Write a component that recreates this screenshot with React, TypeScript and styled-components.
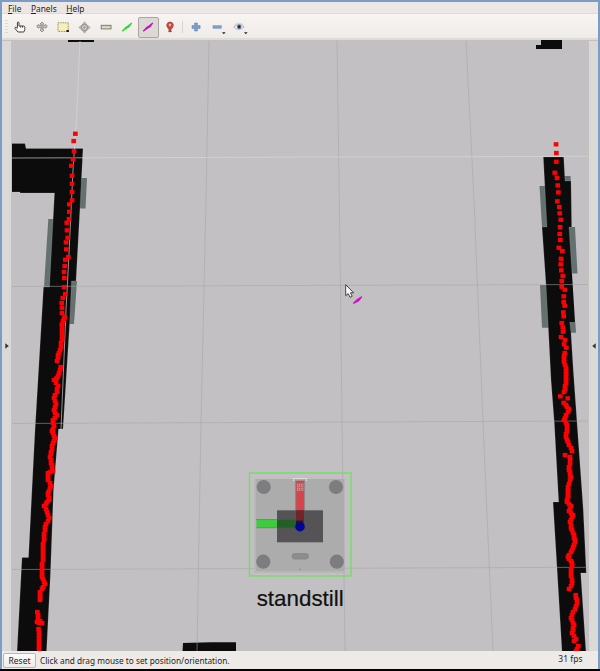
import React from "react";
import styled, { createGlobalStyle, css } from "styled-components";

const GlobalStyle = createGlobalStyle`
  *, *::before, *::after { box-sizing: border-box; }
  body { margin: 0; background: #000; overflow: hidden; }
`;

const Window = styled.div`
  width: 600px;
  height: 671px;
  padding: 2px 2px 0;
  display: flex;
  flex-direction: column;
  background: linear-gradient(#7b9cc5 0 669px, #000 669px);
  font-family: "Noto Sans", sans-serif;
  color: #252525;
`;

const MenuBar = styled.nav`
  display: flex;
  gap: 9.5px;
  height: 12px;
  flex: none;
  padding-left: 6px;
  background: #ece7e4;
  border-bottom: 1px solid #dedad7;
`;

const MenuItem = styled.span`
  font-size: 8.4px;
  line-height: 13px;
  white-space: nowrap;
  u { text-underline-offset: 1px; }
`;

const ToolBar = styled.div`
  display: flex;
  align-items: center;
  height: 26px;
  flex: none;
  padding: 2px 2px 0 3px;
  background: linear-gradient(#f7f4f2, #efebe8);
  border-bottom: 2px solid #dfdcd8;
`;

const Grip = styled.div`
  width: 3px;
  height: 15px;
  margin-right: 1.6px;
  background: repeating-linear-gradient(#dcd8d5 0 1px, transparent 1px 3px);
`;

const ToolButton = styled.button<{ $active?: boolean }>`
  width: 21.35px;
  height: 21px;
  padding: 0;
  display: grid;
  place-items: center;
  flex: none;
  border: 1px solid transparent;
  border-radius: 2px;
  background: none;
  ${(p) =>
    p.$active &&
    css`
      background: #dcd8d6;
      border-color: #aaa5a1;
    `}
  svg { display: block; overflow: visible; }
`;

const Separator = styled.div`
  width: 1px;
  height: 12px;
  margin: 0 2px;
  background: #d7d3d0;
`;

const Workspace = styled.main`
  display: flex;
  flex: none;
  height: 611px;
`;

const Gutter = styled.aside<{ $side: "left" | "right" }>`
  width: 10px;
  flex: none;
  display: grid;
  place-items: center;
  background: #dad9d7;
  border: 0 solid #c3c1bf;
  border-width: ${(p) => (p.$side === "left" ? "1px 1px 0 0" : "1px 0 0 1px")};
`;

const Scene = styled.svg`
  display: block;
  width: 576px;
  height: 611px;
  flex: none;
  background: #c2c0c2;
`;

const StatusBar = styled.footer`
  display: flex;
  align-items: center;
  height: 18px;
  flex: none;
  padding: 0 2px 0 1px;
  background: #eeeae7;
`;

const ResetButton = styled.button`
  width: 33px;
  height: 15px;
  padding: 0;
  border: 1px solid #bbb6b2;
  border-radius: 2px;
  background: linear-gradient(#fdfcfb, #eeebe8);
  color: #222;
  font: 8.5px/13px "Noto Sans", sans-serif;
`;

const Message = styled.span`
  margin-left: 4px;
  padding-top: 1px;
  font-size: 8.27px;
  line-height: 14px;
  white-space: nowrap;
`;

const FrameRate = styled.span`
  margin-left: auto;
  padding: 0 13.5px 3px 0;
  font-size: 8.5px;
  line-height: 14px;
`;

type Point = [number, number];

const leftDots: Point[] = [
  [75.3, 133.7], [73.7, 141], [74, 151.3], [73, 159.3], [71.3, 165.7], [72, 175.7], [72, 183.7],
  [72, 192], [72, 200.3], [69.3, 204.3], [69.3, 211.7], [69, 219], [66.7, 222.7], [67, 230.3],
  [67.7, 237.7], [66, 242.3], [66.3, 249.3], [68.3, 257], [65.3, 259.7], [64.7, 266], [64, 272],
  [64.3, 278], [64, 287], [65.3, 294], [62.7, 298], [61.7, 303], [62, 308], [62, 313],
];

const leftTraces: Point[][] = [
  [[64.7, 317], [62.7, 321], [61.7, 326], [61.7, 340], [60, 350], [57.7, 355], [57.3, 361]],
  [[60.7, 367], [59, 373], [57, 378], [54, 380], [57.5, 386], [56.5, 392], [54, 398], [55.5, 404],
    [53.5, 410], [56.5, 415], [52.5, 420], [54, 426], [51.5, 431], [54.5, 438], [52, 446], [50, 457],
    [52.7, 471], [47.7, 473], [48.3, 480], [51, 486], [47.7, 493], [49, 500], [44.3, 506],
    [46.7, 512], [49, 518], [45, 527], [44, 537], [42.7, 547], [43.3, 557], [41.7, 567],
    [42.3, 577], [44.5, 584], [40.3, 592], [40.3, 600]],
  [[37.3, 612], [37.7, 618], [41.7, 623], [37, 622]],
  [[38.5, 629], [39, 650]],
];

const rightDots: Point[] = [
  [556, 144.3], [556.3, 153], [556.3, 161.7], [554.7, 172.7], [557, 178], [557.7, 185.3],
  [558.3, 192.3], [557.3, 201.3], [559.3, 207], [559.7, 213.3], [560.7, 219.7], [560, 227],
  [559.7, 234], [560.3, 240], [558.7, 247.7], [562.3, 251], [561, 258.7], [560.7, 264.3],
  [561.3, 270.3], [562.7, 276], [561.7, 281], [561.7, 286.7], [564.7, 289.7], [563.7, 296.3],
  [563.7, 302], [564.7, 305.7], [563.3, 312.3], [563.7, 316.3], [561.7, 323], [562.7, 327.3],
  [563, 331.7], [561, 337], [565, 340], [564, 344.3], [566.3, 347.7], [560.3, 396.3],
  [567.7, 398.3], [565, 455],
];

const rightTraces: Point[][] = [
  [[564.7, 353], [564, 362], [566, 368], [566.3, 380], [564, 392]],
  [[563.7, 402.7], [569.3, 409.3], [566, 415], [564, 420], [567.3, 425], [566, 437], [569.3, 445], [571.7, 451]],
  [[570, 457], [569, 470], [571, 477], [568.3, 487], [568.3, 495], [567, 502], [571, 506],
    [569, 511], [573.3, 515], [570, 522], [572.7, 533], [575.3, 540], [573.3, 547], [567.7, 557],
    [572.3, 563], [571, 573], [572.3, 583], [569.3, 589]],
  [[575.7, 595], [577.3, 603], [573.3, 612], [571, 618], [574, 625], [572, 633], [575.5, 639], [574.3, 641]],
  [[578.3, 646], [576, 651]],
];

/** Samples a polyline into evenly spaced scan returns on whole pixels. */
function sample(line: Point[], step = 3.5): Point[] {
  const out: Point[] = [line[0]];
  for (let i = 1; i < line.length; i++) {
    const [x0, y0] = line[i - 1];
    const [x1, y1] = line[i];
    const n = Math.max(1, Math.ceil(Math.hypot(x1 - x0, y1 - y0) / step));
    for (let k = 1; k <= n; k++) {
      out.push([Math.round(x0 + ((x1 - x0) * k) / n), Math.round(y0 + ((y1 - y0) * k) / n)]);
    }
  }
  return out;
}

const scan: Point[] = [
  ...leftDots,
  ...leftTraces.flatMap((t) => sample(t)),
  ...rightDots,
  ...rightTraces.flatMap((t) => sample(t)),
];

function Laser() {
  return (
    <g fill="#fb0204">
      {scan.map(([x, y], i) => (
        <rect key={i} x={x - 2.3} y={y - 2.1} width={4.7} height={4.3} />
      ))}
    </g>
  );
}

function Walls() {
  return (
    <>
      <g fill="#65716f">
        <path d="M81.5 178H87L85.5 208.5H79Z" />
        <path d="M48.3 219H55L51 287H44Z" />
        <path d="M70 281H77L74 324H68Z" />
        <path d="M539.5 186H547L549 227H542Z" />
        <path d="M563 176H570.5L571 184H563Z" />
        <path d="M568 227H575L577.5 273.5H570Z" />
        <path d="M540 285H548L550 327.7H542Z" />
        <path d="M569 322H575.3L576 332.7H569Z" />
      </g>
      <g fill="#0c0c0d" stroke="#dcdcd8" strokeOpacity=".35" strokeWidth=".5">
        <path d="M11 143.5H25L26 148.5H83L80 208L76 281H71.5L69.7 323L63 429H58.5L53.5 490L50.5 573L46.5 652H17L22 557.5H28.5L35 430L43.5 287H49.5L54.5 193H20V192H11Z" />
        <path d="M543.3 157H563.7L565 181H571L571.7 227H569L572 274L569.7 322L571 333L573.3 370L579 450L583.3 510L586.3 573H580.7L586 652H562L557 568L553 502H558.7L554.3 423L551 380L548.3 328L546 285L542 227H547L544.8 186Z" />
      </g>
      <path fill="#0c0c0d" d="M571 274H572L575 322H569ZM68 40H94V42H68ZM541 40H562V49H536V45H541ZM183 643L211 642.3H236V652H182.5Z" />
    </>
  );
}

function Grid() {
  return (
    <g fill="none" strokeWidth="1">
      <g stroke="#a5a4a4" strokeOpacity=".55">
        <path d="M209 41L206 200L201 422L197 651M337 41L340 250L342 422L345 651M466 41L474 200L483 422L493 651" />
        <path d="M12 286.5L588 284.5M12 423.5L588 421M12 569.5L588 567.3" />
      </g>
      <path stroke="#d9d8d7" strokeOpacity=".65" d="M12 158L588 156.3M80 41L76.5 120L73 170L68.7 260L66 310L61 429" />
    </g>
  );
}

function Robot() {
  return (
    <g>
      <rect x="255.5" y="479" width="89" height="93" fill="#adacad" />
      <path d="M255 479V572H344" fill="none" stroke="#b8b7b8" strokeWidth="2" />
      <g fill="#7d7d7f">
        <circle cx="263.7" cy="487" r="7.1" />
        <circle cx="336" cy="487" r="7.1" />
        <circle cx="263.3" cy="561.7" r="7.1" />
        <circle cx="336.8" cy="561.7" r="7.1" />
      </g>
      <path d="M293.5 481V478.5H306.5V481" fill="none" stroke="#dddcdc" />
      <rect x="295.3" y="480.5" width="9.4" height="31" fill="#8b7778" />
      <rect x="296.3" y="481" width="7.6" height="30" fill="#d7434a" />
      <g stroke="#b8a1a1" strokeWidth=".8" fill="none">
        <rect x="297.5" y="484" width="2" height="2.3" />
        <rect x="301" y="484" width="2" height="2.3" />
        <rect x="297.5" y="488" width="2" height="2.3" />
        <rect x="301" y="488" width="2" height="2.3" />
      </g>
      <rect x="277" y="510.3" width="46" height="32" fill="#555355" />
      <rect x="296" y="510.3" width="8" height="13" fill="#732429" />
      <rect x="256.5" y="519.5" width="21" height="8.3" fill="#3ecb3e" />
      <rect x="277" y="519.5" width="20" height="8.3" fill="#235f27" />
      <path d="M256.5 519.5H297M256.5 527.8H297" stroke="#326e34" strokeWidth=".8" strokeDasharray="1 1" />
      <path d="M296 525V520.5H303V524" fill="#281524" />
      <circle cx="300" cy="526.7" r="4.8" fill="#030494" />
      <rect x="292" y="553.5" width="16.5" height="5.6" rx="2.8" fill="#8d8c8e" stroke="#818082" strokeWidth=".7" />
      <circle cx="300" cy="569.5" r=".7" fill="#858486" />
      <rect x="249.5" y="473" width="101.5" height="103" fill="none" stroke="#6de35d" strokeWidth="1.4" />
      <text x="256.7" y="606.3" fontFamily="Liberation Sans, sans-serif" fontSize="22" textLength="87" lengthAdjust="spacingAndGlyphs" fill="#111" stroke="#111" strokeWidth=".2">
        standstill
      </text>
    </g>
  );
}

function Pointer() {
  return (
    <g>
      <path d="M345.7 284.7V295.7L348.2 293.6L350 297.3L352.2 296.3L350.5 292.8H353.6Z" fill="#fafafa" stroke="#333" strokeWidth=".9" />
      <path d="M353.3 303.4L357 299.6L361.8 296.6L359 300.5L356.5 302Z" fill="#d510c9" stroke="#d510c9" strokeWidth="1.1" />
    </g>
  );
}

function HandIcon() {
  return (
    <svg width="12" height="12" viewBox="0 0 12 12">
      <path d="M3.4 6.8V2Q3.4 1 4.2 1T5 2V5H9.4Q10.8 5.2 10.8 6.4V8.5L9.8 11H4L1 7.5Q.6 6.3 1.8 6.2L3.4 7.5M6.7 5.2V6.7M8.6 5.2V6.7" fill="#fff" stroke="#3d3d3d" strokeWidth="1" strokeLinejoin="round" />
    </svg>
  );
}

function OrbitIcon() {
  return (
    <svg width="12" height="12" viewBox="0 0 12 12">
      <g fill="#c9c9c7" stroke="#858585" strokeWidth=".8">
        <path d="M6 1L8 3H7V9H8L6 11L4 9H5V3H4Z" />
        <path d="M.8 4.7L3 3.5V4.5Q6 5.8 9 4.5V3.5L11.2 4.7L10 7.2L9 6.3Q6 7.7 3 6.3L2 7.2Z" />
      </g>
    </svg>
  );
}

function SelectIcon() {
  return (
    <svg width="12" height="12" viewBox="0 0 12 12">
      <rect x="1" y="1.8" width="10.3" height="8.6" fill="#f6efba" stroke="#75704f" strokeWidth=".8" strokeDasharray="1 .7" />
      <path d="M9.5 9H11.8V11H9.5Z" fill="#111" />
    </svg>
  );
}

function FocusIcon() {
  return (
    <svg width="13" height="13" viewBox="0 0 13 13">
      <g fill="#bcbcba" stroke="#999" strokeWidth=".7">
        <path d="M6.5 .8L8.5 3.5H4.5ZM6.5 12.2L8.5 9.5H4.5ZM.8 6.5L3.5 4.5V8.5ZM12.2 6.5L9.5 4.5V8.5Z" />
        <circle cx="6.5" cy="6.5" r="3" fill="#dededc" strokeWidth="1.3" />
        <circle cx="6.5" cy="6.5" r="1" fill="#999" />
      </g>
    </svg>
  );
}

function MeasureIcon() {
  return (
    <svg width="12" height="12" viewBox="0 0 12 12">
      <rect x="1.2" y="4.3" width="9.8" height="3.6" fill="#dedbc4" stroke="#77736c" strokeWidth=".9" />
      <path d="M3 5V6M5 5V6M7 5V6M9 5V6" stroke="#aaa78c" strokeWidth=".5" />
    </svg>
  );
}

function ArrowIcon({ color }: { color: string }) {
  return (
    <svg width="12" height="12" viewBox="0 0 12 12">
      <path d="M1.2 10.2L5 6.3L7 5L10.8 2L8 5.8L5.3 7.4Z" fill={color} stroke={color} strokeWidth="1.1" />
    </svg>
  );
}

function PinIcon() {
  return (
    <svg width="12" height="12" viewBox="0 0 12 12">
      <ellipse cx="6" cy="10.2" rx="2" ry="1" fill="#718052" />
      <path d="M6 11Q5.3 8.4 3.2 6Q2 3.8 3.6 1.9Q6 .1 8.5 1.9Q10 3.8 8.8 6Q6.7 8.4 6 11Z" fill="#d64236" stroke="#9d3930" strokeWidth=".7" />
      <circle cx="6" cy="4" r="1.4" fill="#f4d9d6" stroke="#9a302a" strokeWidth=".4" />
    </svg>
  );
}

function PlusIcon() {
  return (
    <svg width="12" height="12" viewBox="0 0 12 12">
      <path d="M4.6 2H7.4V4.6H10.1V7.4H7.4V10H4.6V7.4H2V4.6H4.6Z" fill="#7b9fca" stroke="#658ab9" strokeWidth=".6" />
    </svg>
  );
}

function MinusIcon() {
  return (
    <svg width="12" height="12" viewBox="0 0 12 12">
      <rect x="2" y="4.7" width="8.3" height="2.6" fill="#7b9fca" stroke="#7293bc" strokeWidth=".5" />
      <path d="M11 11.2H14.6L12.8 13.2Z" fill="#222" />
    </svg>
  );
}

function EyeIcon() {
  return (
    <svg width="12" height="12" viewBox="0 0 12 12">
      <path d="M.8 6Q6 .8 11.2 6Q6 10.8 .8 6Z" fill="#f7f7f6" stroke="#a6a5a3" strokeWidth=".8" />
      <path d="M1.5 4Q6 .2 10.5 4" fill="none" stroke="#bcbbb9" strokeWidth=".6" />
      <circle cx="6.2" cy="5.8" r="2.4" fill="#6682a3" />
      <circle cx="6.2" cy="5.8" r="1.3" fill="#13223a" />
      <path d="M11 11.2H14.6L12.8 13.2Z" fill="#222" />
    </svg>
  );
}

export default function App() {
  return (
    <>
      <GlobalStyle />
      <Window>
        <MenuBar>
          <MenuItem><u>F</u>ile</MenuItem>
          <MenuItem><u>P</u>anels</MenuItem>
          <MenuItem><u>H</u>elp</MenuItem>
        </MenuBar>
        <ToolBar>
          <Grip />
          <ToolButton aria-label="Interact"><HandIcon /></ToolButton>
          <ToolButton aria-label="Move camera"><OrbitIcon /></ToolButton>
          <ToolButton aria-label="Select"><SelectIcon /></ToolButton>
          <ToolButton aria-label="Focus camera"><FocusIcon /></ToolButton>
          <ToolButton aria-label="Measure"><MeasureIcon /></ToolButton>
          <ToolButton aria-label="Pose estimate"><ArrowIcon color="#27dc36" /></ToolButton>
          <ToolButton aria-label="Navigation goal" $active><ArrowIcon color="#c712bd" /></ToolButton>
          <ToolButton aria-label="Publish point"><PinIcon /></ToolButton>
          <Separator />
          <ToolButton aria-label="Add tool"><PlusIcon /></ToolButton>
          <ToolButton aria-label="Remove tool"><MinusIcon /></ToolButton>
          <ToolButton aria-label="Visibility"><EyeIcon /></ToolButton>
        </ToolBar>
        <Workspace>
          <Gutter $side="left">
            <svg width="4" height="6"><path d="M.3 .3V5.7L3.8 3Z" fill="#333" /></svg>
          </Gutter>
          <Scene viewBox="12 40 576 611">
            <Walls />
            <Grid />
            <Laser />
            <Robot />
            <Pointer />
          </Scene>
          <Gutter $side="right">
            <svg width="4" height="6"><path d="M3.7 .3V5.7L.2 3Z" fill="#333" /></svg>
          </Gutter>
        </Workspace>
        <StatusBar>
          <ResetButton>Reset</ResetButton>
          <Message>Click and drag mouse to set position/orientation.</Message>
          <FrameRate>31 fps</FrameRate>
        </StatusBar>
      </Window>
    </>
  );
}
